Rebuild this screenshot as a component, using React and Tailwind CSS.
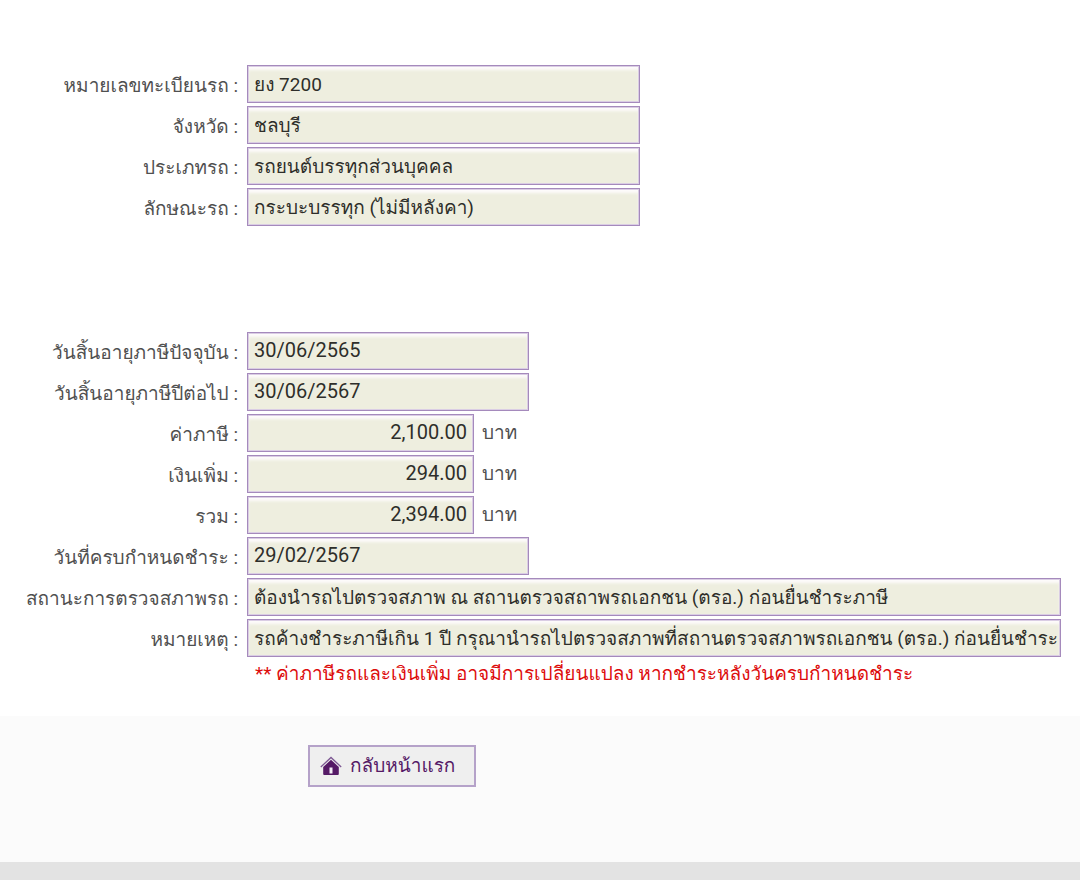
import React from 'react';

// --- Section 1: Vehicle ---
const vehicleFields = [
  { id: 'plate', label: 'หมายเลขทะเบียนรถ', value: 'ยง 7200', size: 'medium' },
  { id: 'province', label: 'จังหวัด', value: 'ชลบุรี', size: 'medium' },
  { id: 'type', label: 'ประเภทรถ', value: 'รถยนต์บรรทุกส่วนบุคคล', size: 'medium' },
  { id: 'body', label: 'ลักษณะรถ', value: 'กระบะบรรทุก (ไม่มีหลังคา)', size: 'medium' },
];

// --- Section 2: Tax ---
const taxFields = [
  { id: 'currentExpiry', label: 'วันสิ้นอายุภาษีปัจจุบัน', value: '30/06/2565', size: 'date' },
  { id: 'nextExpiry', label: 'วันสิ้นอายุภาษีปีต่อไป', value: '30/06/2567', size: 'date' },
  { id: 'tax', label: 'ค่าภาษี', value: '2,100.00', size: 'money', unit: 'บาท' },
  { id: 'surcharge', label: 'เงินเพิ่ม', value: '294.00', size: 'money', unit: 'บาท' },
  { id: 'total', label: 'รวม', value: '2,394.00', size: 'money', unit: 'บาท' },
  { id: 'dueDate', label: 'วันที่ครบกำหนดชำระ', value: '29/02/2567', size: 'date' },
  {
    id: 'inspection',
    label: 'สถานะการตรวจสภาพรถ',
    value: 'ต้องนำรถไปตรวจสภาพ ณ สถานตรวจสถาพรถเอกชน (ตรอ.) ก่อนยื่นชำระภาษี',
    size: 'full',
  },
  {
    id: 'remark',
    label: 'หมายเหตุ',
    value: 'รถค้างชำระภาษีเกิน 1 ปี กรุณานำรถไปตรวจสภาพที่สถานตรวจสภาพรถเอกชน (ตรอ.) ก่อนยื่นชำระ',
    size: 'full',
  },
];

const sizes = {
  medium: 'w-[393px] px-1.5',
  date: 'w-[282px] px-1.5 pb-0.5 text-[20px]',
  money: 'w-[227px] px-1.5 pb-0.5 text-right text-[20px]',
  full: 'w-full pr-0.5 pl-1.5',
};

const Field = ({ id, label, value, size, unit }) => (
  <div className="grid grid-cols-[238px_1fr] items-center gap-x-[9px]">
    <label htmlFor={id} className="pt-[3px] text-right whitespace-nowrap text-[#505050]">{label} :</label>
    <div className="flex items-center gap-2">
      <input
        id={id}
        type="text"
        readOnly
        defaultValue={value}
        className={`h-[38px] min-w-0 border border-[#a58abc] bg-[#eeeedf] text-[#2e2e2a] shadow-[inset_0_0_0_1px_#dacde4,inset_0_4px_3px_#fdfbfb] outline-none ${sizes[size]}`}
      />
      {unit && <span className="text-[#505050]">{unit}</span>}
    </div>
  </div>
);

const HomeIcon = () => (
  <svg viewBox="0 0 22 20" className="h-5 w-[22px]" aria-hidden="true">
    <path d="M0.8 11 L11 1.5 L21.2 11" fill="none" stroke="#7d5893" strokeWidth="1.3" />
    <path d="M11 3.8 L18.8 11 V18 Q18.8 19 17.8 19 H4.2 Q3.2 19 3.2 18 V11 Z" fill="#551a66" />
    <rect x="9.5" y="11.5" width="3" height="6" fill="#f3eef5" />
  </svg>
);

const App = () => (
  <main className="bg-white font-['Roboto','Loma',sans-serif] text-[19px] leading-7">
    <section className="flex flex-col gap-[3px] pt-[65px] pr-[19px]">
      {vehicleFields.map((field) => <Field key={field.id} {...field} />)}
    </section>

    <section className="flex flex-col gap-[3px] pt-[106px] pr-[19px] pb-7">
      {taxFields.map((field) => <Field key={field.id} {...field} />)}
      <p className="pl-[255px] text-[#dd0c0c]">
        ** ค่าภาษีรถและเงินเพิ่ม อาจมีการเปลี่ยนแปลง หากชำระหลังวันครบกำหนดชำระ
      </p>
    </section>

    <div className="bg-[#fbfbfb] pt-[29px] pb-[75px] pl-[308px]">
      <button
        type="button"
        className="flex h-[42px] w-[168px] items-center gap-2 border-2 border-[#b5a2c9] bg-[#efefef] px-2.5 text-[#551a66]"
      >
        <HomeIcon />
        <span>กลับหน้าแรก</span>
      </button>
    </div>

    <footer className="h-[18px] bg-[#e3e3e3]" />
  </main>
);

export default App;
